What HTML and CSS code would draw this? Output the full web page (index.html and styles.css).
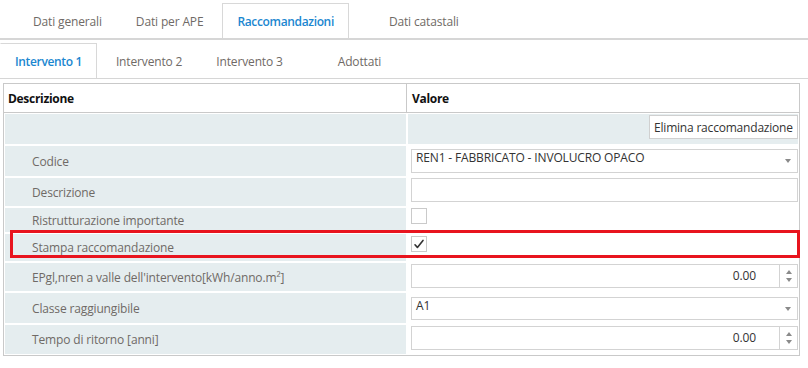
FILE: index.html
```html
<!DOCTYPE html>
<html lang="it">
<head>
<meta charset="utf-8">
<title>Raccomandazioni</title>
<link rel="stylesheet" href="styles.css">
</head>
<body>
<div class="tabs tabs-top">
  <div class="tab">Dati generali</div>
  <div class="tab">Dati per APE</div>
  <div class="tab active">Raccomandazioni</div>
  <div class="tab wide">Dati catastali</div>
</div>
<div class="tabs tabs-sub">
  <div class="tab active">Intervento 1</div>
  <div class="tab">Intervento 2</div>
  <div class="tab">Intervento 3</div>
  <div class="tab wide">Adottati</div>
</div>
<div class="panel">
  <div class="head">
    <div class="hcell hleft">Descrizione</div>
    <div class="hcell">Valore</div>
  </div>
  <div class="grid">
    <div class="lab"></div>
    <div class="val val-tint p1"><button class="btn">Elimina raccomandazione</button></div>

    <div class="lab">Codice</div>
    <div class="val p3"><div class="field select">REN1 - FABBRICATO - INVOLUCRO OPACO<span class="arrow"></span></div></div>

    <div class="lab">Descrizione</div>
    <div class="val"><div class="field"></div></div>

    <div class="lab">Ristrutturazione importante</div>
    <div class="val"><div class="check"></div></div>

    <div class="lab">Stampa raccomandazione</div>
    <div class="val p2"><div class="check"><svg width="14" height="14" viewBox="0 0 14 14"><path d="M3 7.8 L5.4 10.4 L11 3.4" fill="none" stroke="#333" stroke-width="1.6" stroke-linecap="round" stroke-linejoin="round"/></svg></div></div>

    <div class="lab">EPgl,nren a valle dell'intervento[kWh/anno.m²]</div>
    <div class="val p1"><div class="field num"><span class="numval">0.00</span><span class="spin"><span class="up"></span><span class="down"></span></span></div></div>

    <div class="lab">Classe raggiungibile</div>
    <div class="val p4"><div class="field select short">A1<span class="arrow"></span></div></div>

    <div class="lab">Tempo di ritorno [anni]</div>
    <div class="val p1"><div class="field num"><span class="numval">0.00</span><span class="spin"><span class="up"></span><span class="down"></span></span></div></div>
  </div>
  <div class="highlight"></div>
</div>
</body>
</html>
```
FILE: styles.css
```css
* { box-sizing: border-box; }
body {
  margin: 0;
  background: #fff;
  font-family: "Open Sans", "Noto Sans", sans-serif;
  font-size: 12px;
  letter-spacing: -0.15px;
  color: #333;
}
.tabs {
  display: flex;
  gap: 4px;
}
.tabs-top {
  padding: 3px 0 0 18px;
  border-bottom: 2px solid #d6d6d6;
}
.tabs-sub {
  padding-top: 3px;
  border-bottom: 1px solid #d6d6d6;
}
.tab {
  height: 35px;
  padding: 0 14px;
  display: flex;
  align-items: center;
  color: #6f6a66;
  border: 1px solid transparent;
  border-bottom: none;
}
.tab.wide { padding: 0 35px; }
.tab.active {
  color: #1b87d0;
  font-weight: 600;
  letter-spacing: -0.35px;
  border-color: #d8d8d8;
  background: #fff;
}
.tabs-sub .tab:first-child { border-left-color: transparent; }

.panel {
  position: relative;
  margin: 4px 0 0 3px;
  width: 797px;
  border: 1px solid #c9c9c9;
}
.head {
  display: grid;
  grid-template-columns: 403px 1fr;
  height: 29px;
  border-bottom: 1px solid #c9c9c9;
}
.hcell {
  display: flex;
  align-items: center;
  padding-left: 5px;
  font-weight: 700;
  color: #111;
  letter-spacing: -0.3px;
}
.hleft {
  padding-left: 4px;
  border-right: 1px solid #c9c9c9;
}
.grid {
  display: grid;
  grid-template-columns: 401px 390px;
  grid-template-rows: 30px 30px 28px 24px 27px 28px 30px 29px;
  gap: 2px;
  padding: 1px;
}
.lab {
  background: #e5edef;
  padding-left: 27px;
  display: flex;
  align-items: center;
  color: #6f6a66;
}
.val {
  padding-left: 3px;
}
.val-tint {
  background: #e5edef;
  display: flex;
  justify-content: flex-end;
}
.p1 { padding-top: 1px; }
.p2 { padding-top: 2px; }
.p3 { padding-top: 3px; }
.p4 { padding-top: 4px; }
.btn {
  height: 24px;
  width: 149px;
  padding: 0 0 0 4px;
  text-align: left;
  border: 1px solid #d0d0d0;
  background: #fff;
  font: inherit;
  letter-spacing: -0.2px;
  color: #333;
  white-space: nowrap;
}
.field {
  position: relative;
  width: 387px;
  height: 24px;
  border: 1px solid #d3d3d3;
  background: #fff;
  line-height: 16px;
  padding-left: 4px;
  color: #333;
}
.field.short { height: 23px; }
.arrow {
  position: absolute;
  right: 6px;
  top: 50%;
  margin-top: -2px;
  border-left: 3.5px solid transparent;
  border-right: 3.5px solid transparent;
  border-top: 4px solid #8a8a8a;
}
.num {
  display: flex;
  align-items: center;
  justify-content: flex-end;
  padding: 0;
}
.numval { padding-right: 23px; }
.spin {
  width: 18px;
  height: 100%;
  border-left: 1px solid #d3d3d3;
  display: flex;
  flex-direction: column;
  align-items: center;
  justify-content: center;
  gap: 4px;
}
.up {
  border-left: 3.5px solid transparent;
  border-right: 3.5px solid transparent;
  border-bottom: 4px solid #8a8a8a;
}
.down {
  border-left: 3.5px solid transparent;
  border-right: 3.5px solid transparent;
  border-top: 4px solid #8a8a8a;
}
.check {
  width: 16px;
  height: 16px;
  border: 1px solid #cacaca;
  background: #fff;
  display: flex;
  align-items: center;
  justify-content: center;
}
.highlight {
  position: absolute;
  left: 6px;
  top: 146px;
  width: 790px;
  height: 28px;
  border: 3px solid #e8141e;
}
```
